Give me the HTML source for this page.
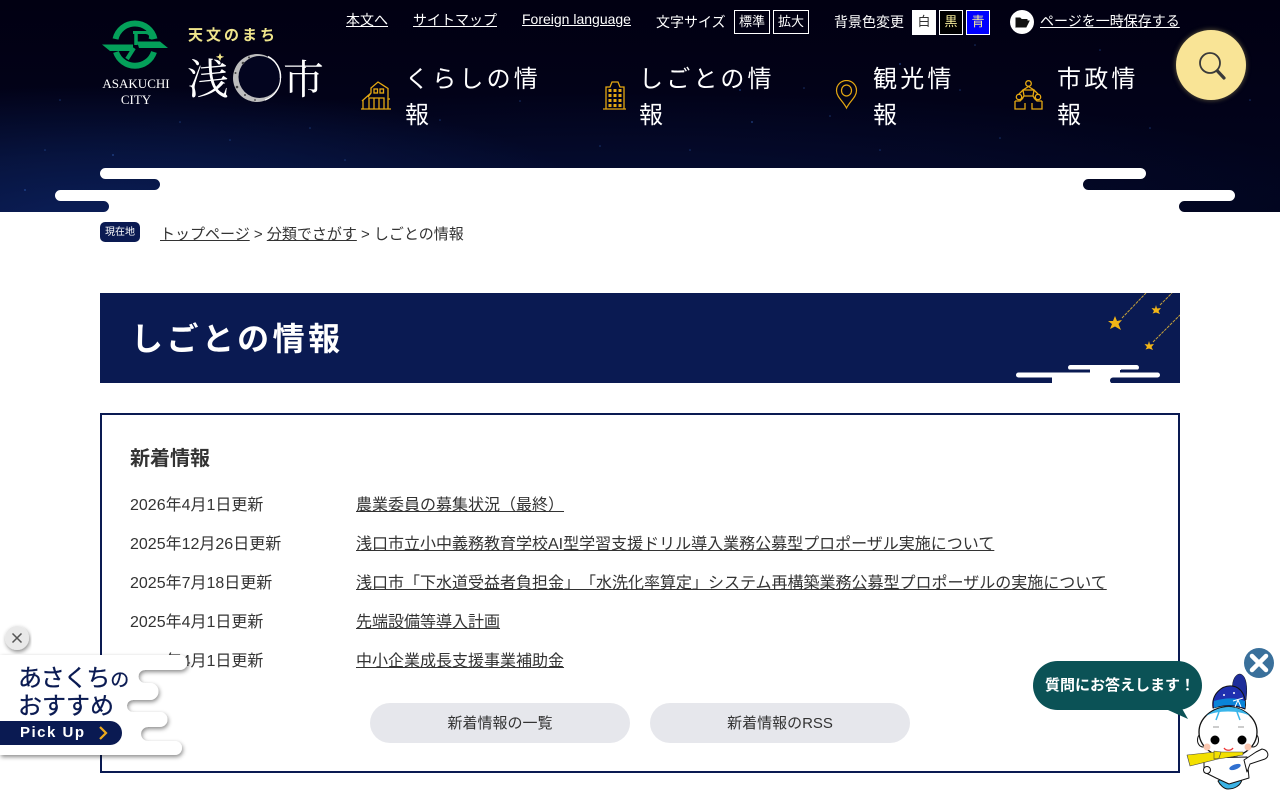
<!DOCTYPE html>
<html lang="ja"><head><meta charset="utf-8"><title>しごとの情報 | 浅口市</title>
<style>
html,body{margin:0;padding:0;background:#fff}
body{width:1280px;height:800px;overflow:hidden;position:relative;font-family:"Liberation Sans","Noto Sans CJK JP",sans-serif;color:#333;font-size:16px;text-spacing-trim:space-all}
a{color:inherit}
.a{position:absolute;white-space:nowrap}
#hd{position:absolute;left:0;top:0;width:1280px;height:212px;background:radial-gradient(ellipse 520px 140px at 100px 225px,#0b1f5a 0%,rgba(9,26,76,.7) 50%,rgba(5,10,40,0) 100%),radial-gradient(ellipse 720px 100px at 620px 190px,rgba(7,18,62,.65) 0%,rgba(5,10,40,0) 100%),linear-gradient(#010012 0%,#020218 45%,#02051f 100%);overflow:hidden}
.t{color:#fff;font-size:14px;line-height:20px}
.nav{color:#fff;font-size:24px;line-height:36px;letter-spacing:3.2px;white-space:nowrap}
.b{position:absolute;box-sizing:border-box;border:1px solid #fff;text-align:center;font-size:13px;line-height:22px;color:#fff}
.r{position:absolute;left:130px;white-space:nowrap;line-height:24px}
.l{position:absolute;left:356px;white-space:nowrap;line-height:24px;text-decoration:underline}
.btn{position:absolute;top:703px;width:260px;height:40px;border-radius:20px;background:#e6e7ec;text-align:center;font-size:15px;line-height:42px;color:#333}
</style></head><body>

<div id="hd">
<svg width="1280" height="212" style="position:absolute;left:0;top:0" fill="#2f5cae">
<g opacity=".55"><circle cx="113" cy="155" r="1"/><circle cx="45" cy="150" r=".8"/><circle cx="230" cy="140" r=".8"/><circle cx="310" cy="128" r=".8"/><circle cx="440" cy="120" r=".8"/><circle cx="520" cy="101" r=".8"/><circle cx="600" cy="146" r=".8"/><circle cx="740" cy="90" r="1"/><circle cx="804" cy="88" r=".8"/><circle cx="752" cy="122" r="1"/><circle cx="900" cy="64" r="1"/><circle cx="975" cy="45" r=".8"/><circle cx="1000" cy="138" r=".8"/><circle cx="1150" cy="128" r=".8"/><circle cx="1250" cy="100" r=".8"/><circle cx="830" cy="116" r=".8"/><circle cx="60" cy="100" r=".8"/><circle cx="180" cy="122" r=".8"/><circle cx="345" cy="160" r=".8"/><circle cx="690" cy="150" r=".8"/><circle cx="880" cy="150" r=".8"/><circle cx="25" cy="190" r="1"/><circle cx="960" cy="90" r=".8"/><circle cx="1100" cy="50" r=".8"/></g>
<path fill="#fff" d="M105.500 168H1140.500a5.500 5.500 0 0 1 0 11H1088.500a5.500 5.500 0 0 0 0 11H1229.500a5.500 5.500 0 0 1 0 11H1184.500a5.500 5.500 0 0 0 0 11H103.500a5.500 5.500 0 0 0 0-11H60.500a5.500 5.500 0 0 1 0-11H154.500a5.500 5.500 0 0 0 0-11H105.500a5.500 5.500 0 0 1 0-11Z"/>
</svg>
</div>

<!-- logo -->
<svg class="a" style="left:100px;top:18px" width="230" height="90">
<g fill="none" stroke="#04a05a" stroke-width="6">
<path d="M15.500 21A20 20 0 0 1 54.500 21"/><path d="M16 34A20 20 0 0 0 54 34"/>
</g>
<path d="M2 26.500H33V33H10Z" fill="#04a05a"/>
<path d="M37 23.500H60L68 30H39Z" fill="#04a05a"/>
<path d="M36 13V27" stroke="#04a05a" stroke-width="3.500" fill="none"/>
<path d="M33 14.500H46Q52 15.500 50 21" stroke="#04a05a" stroke-width="3" fill="none"/>
<path d="M34 30L27 41" stroke="#04a05a" stroke-width="4" fill="none"/>
<circle cx="157" cy="60" r="24" fill="#bdbdbd"/>
<circle cx="159.500" cy="59" r="21" fill="#03051f"/>
<path d="M180.500 60A23.500 23.500 0 0 1 165 82" stroke="#fff" stroke-width="1.200" fill="none"/>
<path d="M168 38.500A23 23 0 0 1 180.500 60" stroke="#fff" stroke-width="1.500" fill="none"/>
<g fill="#444"><circle cx="143" cy="45" r="1.300"/><circle cx="149" cy="39.500" r="1"/><circle cx="135.500" cy="55" r="1"/><circle cx="137" cy="69" r="1.300"/><circle cx="145" cy="77" r="1"/><circle cx="155" cy="82" r=".9"/></g>
<path d="M120 35l1.200 3 3 .8-3 1.200-1.200 3-1.200-3-3-1.200 3-.8Z" fill="#f4e88c"/>
</svg>
<div class="a" style="left:96px;top:76px;width:80px;text-align:center;font:13px/16px 'Liberation Serif',serif;color:#fff;white-space:normal">ASAKUCHI<br>CITY</div>
<div class="a" style="left:188px;top:27px;font-size:15px;font-weight:bold;letter-spacing:3px;line-height:18px;color:#efe58c">天文のまち</div>
<div class="a" style="left:187px;top:50px;font:42px/54px 'Noto Serif CJK SC',serif;color:#fff">浅</div>
<div class="a" style="left:283px;top:50px;font:41px/54px 'Noto Serif CJK SC',serif;color:#fff">市</div>

<!-- utility -->
<a class="a t" style="left:346px;top:10px;text-decoration:underline">本文へ</a>
<a class="a t" style="left:413px;top:10px;text-decoration:underline">サイトマップ</a>
<a class="a t" style="left:522px;top:9px;text-decoration:underline">Foreign language</a>
<div class="a t" style="left:656px;top:12px">文字サイズ</div>
<div class="b" style="left:734px;top:10px;width:36px;height:24px">標準</div>
<div class="b" style="left:773px;top:10px;width:36px;height:24px">拡大</div>
<div class="a t" style="left:834px;top:12px">背景色変更</div>
<div class="b" style="left:912px;top:10px;width:24px;height:25px;background:#fff;color:#333">白</div>
<div class="b" style="left:939px;top:10px;width:24px;height:25px;background:#000;color:#f5ec9a">黒</div>
<div class="b" style="left:966px;top:10px;width:24px;height:25px;background:#00f;color:#f5ec9a">青</div>
<svg class="a" style="left:1010px;top:10px" width="24" height="24"><circle cx="12" cy="12" r="12" fill="#fff"/><path d="M6 17V8H10L11.500 9.500H17V11H9L6 17H16L19 11H9" fill="#111" stroke="#111" stroke-width="1"/></svg>
<a class="a t" style="left:1040px;top:11px;text-decoration:underline">ページを一時保存する</a>

<!-- search -->
<div class="a" style="left:1176px;top:30px;width:70px;height:70px;border-radius:50%;background:#f9e496;box-shadow:0 0 4px 1px rgba(120,110,70,.6)"></div>
<svg class="a" style="left:1176px;top:30px" width="70" height="70"><circle cx="34" cy="33" r="10" fill="none" stroke="#3a3a3a" stroke-width="1.800"/><path d="M41.500 41L48 48" stroke="#3a3a3a" stroke-width="3.200" stroke-linecap="round"/></svg>

<!-- nav -->
<svg class="a" style="left:360px;top:80px" width="32" height="32" fill="none" stroke="#e5a812" stroke-width="1.300">
<path d="M1 29H31M3 29V20M2 21L11 13V8L18 2L28 8.500V29M9 29V18H24V29M14 18V29M19 18V29M8 17L11 13"/><rect x="14" y="9" width="3.500" height="4"/><rect x="20" y="9" width="3.500" height="4"/><path d="M28 19H30"/>
</svg>
<svg class="a" style="left:603px;top:80px" width="24" height="32" fill="none" stroke="#e5a812" stroke-width="1.300">
<path d="M0 29H23M3 29V7H7L9 2H15L17 7H21V29"/>
<g fill="#e5a812" stroke="none"><rect x="5.500" y="9" width="3" height="3"/><rect x="10.500" y="9" width="3" height="3"/><rect x="15.500" y="9" width="3" height="3"/><rect x="5.500" y="14" width="3" height="3"/><rect x="10.500" y="14" width="3" height="3"/><rect x="15.500" y="14" width="3" height="3"/><rect x="5.500" y="19" width="3" height="3"/><rect x="10.500" y="19" width="3" height="3"/><rect x="15.500" y="19" width="3" height="3"/><rect x="5.500" y="24" width="3" height="3"/><rect x="10.500" y="24" width="3" height="3"/><rect x="15.500" y="24" width="3" height="3"/></g>
</svg>
<svg class="a" style="left:835px;top:80px" width="24" height="30" fill="none" stroke="#e5a812" stroke-width="1.200">
<path d="M11.500 28C8 21 1.500 17 1.500 10.500A10 10 0 0 1 21.500 10.500C21.500 17 15 21 11.500 28Z"/><ellipse cx="11.500" cy="10.500" rx="5" ry="5.500"/>
</svg>
<svg class="a" style="left:1014px;top:80px" width="30" height="32" fill="none" stroke="#e5a812" stroke-width="1.300">
<circle cx="14.500" cy="3.500" r="2.800"/><path d="M14.500 6.500L9 10L5 14M14.500 6.500L20 10L24 14M9 10H20L19 16H10ZM10 16L8 19M19 16L21 19"/>
<circle cx="5" cy="17" r="2.700"/><circle cx="24" cy="17" r="2.700"/>
<path d="M1 21H6L9 18M1 21V29H11V23M28 21H23L20 18M28 21V29H18V23"/>
</svg>
<div class="a nav" style="left:405px;top:62px">くらしの情<br>報</div>
<div class="a nav" style="left:639px;top:62px">しごとの情<br>報</div>
<div class="a nav" style="left:873px;top:62px">観光情<br>報</div>
<div class="a nav" style="left:1057px;top:62px">市政情<br>報</div>

<!-- breadcrumb -->
<div class="a" style="left:100px;top:222px;width:40px;height:20px;border-radius:5px;background:#0a1a52;color:#fff;font-size:10px;line-height:21px;text-align:center">現在地</div>
<div class="a" style="left:160px;top:225px;font-size:15px;line-height:20px;color:#333"><a style="text-decoration:underline">トップページ</a> &gt; <a style="text-decoration:underline">分類でさがす</a> &gt; しごとの情報</div>

<!-- title -->
<div class="a" style="left:100px;top:293px;width:1080px;height:90px;background:#0a1a52;overflow:hidden">
<div class="a" style="left:31px;top:23px;font-size:32px;font-weight:bold;line-height:46px;letter-spacing:3.500px;color:#fff">しごとの情報</div>
<svg width="1080" height="90" style="position:absolute;left:0;top:0">
<g stroke="#c6a23a" stroke-width="1" stroke-dasharray="3 1"><path d="M1022 25L1046 0M1060 12L1072 0M1053 49L1080 22"/></g>
<g fill="#f2b517"><path d="M1015 23L1017 28L1022 27L1018.500 31L1021 37L1015 33.500L1010 36L1012 31L1008 28L1013 28Z"/><path d="M1056 12L1057 15.500L1061 15L1058.500 18L1060 21L1056 19.500L1052.500 20.500L1054 18L1051.500 15L1055 15.500Z"/><path d="M1049 48L1050 51.500L1054 51L1051.500 54L1053 57L1049 55.500L1045.500 56.500L1047 54L1044.500 51L1048 51.500Z"/></g>
<rect x="968" y="72" width="71" height="5" rx="2.500" fill="#fff"/>
<rect x="990" y="74" width="30" height="16" fill="#fff"/>
<rect x="916" y="79.500" width="144" height="5" rx="2.500" fill="#fff"/>
<rect x="952" y="84" width="58" height="6" fill="#fff"/>
<rect x="968" y="76.500" width="22" height="3" fill="#0a1a52"/><rect x="1021" y="76.500" width="39" height="3" fill="#0a1a52"/>
<rect x="916" y="84.500" width="36" height="6" rx="3" fill="#0a1a52"/><rect x="1010" y="84.500" width="70" height="6" rx="3" fill="#0a1a52"/>
</svg>
</div>

<!-- box -->
<div class="a" style="left:100px;top:413px;width:1080px;height:360px;box-sizing:border-box;border:2px solid #0a1a52"></div>
<div class="a" style="left:130px;top:445px;font-size:20px;font-weight:bold;line-height:28px">新着情報</div>
<div class="r" style="top:494px">2026年4月1日更新</div><a class="l" style="top:494px">農業委員の募集状況（最終）</a>
<div class="r" style="top:533px">2025年12月26日更新</div><a class="l" style="top:533px">浅口市立小中義務教育学校AI型学習支援ドリル導入業務公募型プロポーザル実施について</a>
<div class="r" style="top:572px">2025年7月18日更新</div><a class="l" style="top:572px">浅口市「下水道受益者負担金」「水洗化率算定」システム再構築業務公募型プロポーザルの実施について</a>
<div class="r" style="top:611px">2025年4月1日更新</div><a class="l" style="top:611px">先端設備等導入計画</a>
<div class="r" style="top:650px">2025年4月1日更新</div><a class="l" style="top:650px">中小企業成長支援事業補助金</a>
<div class="btn" style="left:370px">新着情報の一覧</div>
<div class="btn" style="left:650px">新着情報のRSS</div>

<!-- left banner -->
<svg class="a" style="left:0;top:620px;overflow:visible" width="200" height="145">
<defs><filter id="s" x="-10%" y="-10%" width="120%" height="125%"><feDropShadow dx="1" dy="2" stdDeviation="2" flood-color="#000" flood-opacity=".45"/></filter></defs>
<circle cx="17" cy="18" r="12" fill="#e9e9e9" filter="url(#s)"/>
<path d="M12.500 13.500L21.500 22.500M21.500 13.500L12.500 22.500" stroke="#555" stroke-width="1.500"/>
<path filter="url(#s)" fill="#fff" d="M0 35H180A7.500 7.500 0 0 1 180 50H145A6.500 6.500 0 0 0 145 63H150A8.500 8.500 0 0 1 150 80H133A6 6 0 0 0 133 92H160A7.500 7.500 0 0 1 160 107H148A7 7 0 0 0 148 121H175A7 7 0 0 1 175 135H0Z"/>
<path d="M0 101H110A12 12 0 0 1 110 125H0Z" fill="#0a1a52"/>
<path d="M100 107L106 113L100 119" fill="none" stroke="#efab1d" stroke-width="2.200"/>
</svg>
<div class="a" style="left:18px;top:664px;font-size:24px;font-weight:400;-webkit-text-stroke:.3px #0a1a52;letter-spacing:-1.200px;line-height:30px;color:#0a1a52">あさくち<span style="font-size:19px;letter-spacing:0;margin-left:1px">の</span></div>
<div class="a" style="left:18px;top:692px;font-size:24px;font-weight:400;-webkit-text-stroke:.3px #0a1a52;line-height:30px;color:#0a1a52">おすすめ</div>
<div class="a" style="left:20px;top:722px;font-size:15px;font-weight:bold;letter-spacing:1.500px;line-height:22px;color:#fff">Pick Up</div>

<!-- chat -->
<svg class="a" style="left:1030px;top:645px" width="250" height="155">
<path d="M138 65L158 74L150 60Z" fill="#0b5256"/>
<rect x="3" y="16" width="169" height="49" rx="24.500" fill="#0b5256"/>
<circle cx="229" cy="18" r="15" fill="#3a709b"/>
<path d="M222 11L236 25M236 11L222 25" stroke="#fff" stroke-width="4.500" stroke-linecap="round"/>
<!-- mascot -->
<g transform="translate(-2030 -645)" stroke-linejoin="round">
<path d="M2233 693C2231 684 2234 674 2240 674C2246 675 2248 686 2246 700Z" fill="#1e2d9a" stroke="#111" stroke-width=".5"/>
<path d="M2221 779H2242C2241 786 2234 789 2228 789C2224 789 2220 785 2218 781Z" fill="#3bb2e4" stroke="#111"/>
<path d="M2204 758L2247 757L2249 778L2229 784L2216 778L2204 772Z" fill="#fff" stroke="#111"/>
<path d="M2244 760L2256 752L2262 749C2268 750 2270 756 2265 759L2250 764L2247 772Z" fill="#fff" stroke="#111"/>
<ellipse cx="2203" cy="740" rx="5.500" ry="7" fill="#fff" stroke="#111"/>
<ellipse cx="2253" cy="740" rx="5.500" ry="7" fill="#fff" stroke="#111"/>
<ellipse cx="2228" cy="732" rx="29" ry="25" fill="#fff" stroke="#111" stroke-width="1.300"/>
<path d="M2206 716C2220 704 2238 704 2250 716C2240 710 2216 710 2206 716Z" fill="#39b5ea"/>
<path d="M2219 712L2216 720M2237 712L2240 720" stroke="#39b5ea" stroke-width="1.500"/>
<path d="M2213 708C2211 694 2222 685 2232 686C2242 687 2247 698 2245 709C2235 705 2223 705 2213 708Z" fill="#2030b0" stroke="#111"/>
<path d="M2214 708C2224 704 2235 704 2245 708L2245 701C2235 697 2224 698 2214 701Z" fill="#0a84d8"/>
<circle cx="2224" cy="695" r="1" fill="#fff"/><circle cx="2234" cy="693" r="1" fill="#fff"/><path d="M2233 701L2243 698M2238 700L2235 707M2238 700L2241 707" stroke="#fff"/>
<path d="M2213 727h6M2238 727h6" stroke="#bbb" stroke-width="1.500"/>
<circle cx="2215" cy="740" r="4.500" fill="#000"/><circle cx="2242" cy="740" r="4.500" fill="#000"/>
<circle cx="2207" cy="747" r="3.500" fill="#fbc7b0"/><circle cx="2248" cy="747" r="3.500" fill="#fbc7b0"/>
<path d="M2224 748C2226 751 2231 751 2233 748" fill="none" stroke="#e33" stroke-width="1.300"/>
<path d="M2187 755L2215 752L2243 752L2243 755L2218 759L2190 766Z" fill="#f3e000" stroke="#444" stroke-width=".6"/>
<path d="M2214 751L2221 752L2219 758L2214 759Z" fill="#f3e000" stroke="#444" stroke-width=".6"/>
<circle cx="2207" cy="770" r="3.500" fill="#fff" stroke="#111"/>
<ellipse cx="2235" cy="767" rx="6" ry="2.500" fill="#3070d0" transform="rotate(-20 2235 767)"/>
</g>
</svg>
<div class="a" style="left:1045px;top:675px;font-size:15px;font-weight:bold;line-height:21px;color:#fff">質問にお答えします！</div>
</body></html>
